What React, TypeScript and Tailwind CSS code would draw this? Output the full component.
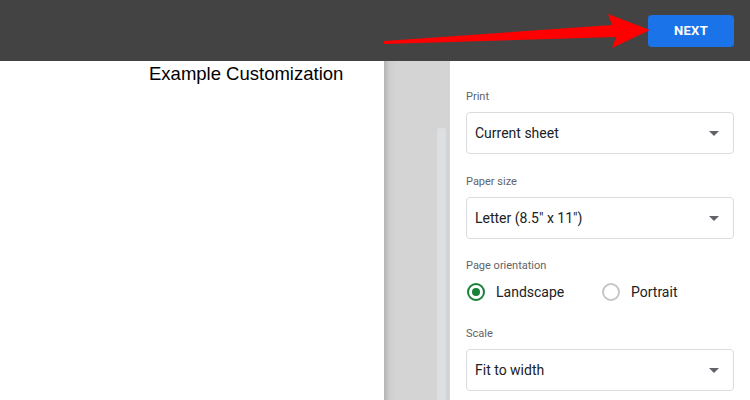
const labelCls =
  "text-[11px] leading-4 text-[#5f6368] font-['Roboto',sans-serif]";

function Select({ value }: { value: string }) {
  return (
    <div className="flex h-[42px] items-center justify-between rounded border border-[#dadce0] bg-white pl-2 pr-[14px]">
      <span className="text-[14px] text-[#202124] font-['Roboto',sans-serif]">
        {value}
      </span>
      <span className="h-0 w-0 border-x-[5px] border-t-[5px] border-x-transparent border-t-[#5f6368]" />
    </div>
  );
}

function Radio({ label, checked }: { label: string; checked?: boolean }) {
  return (
    <div className={checked ? "flex w-[135px] items-center" : "flex items-center"}>
      <span
        className={
          checked
            ? "flex h-[18px] w-[18px] items-center justify-center rounded-full border-2 border-[#188038]"
            : "flex h-[18px] w-[18px] items-center justify-center rounded-full border-2 border-[#c4c7c5]"
        }
      >
        {checked && <span className="h-2 w-2 rounded-full bg-[#188038]" />}
      </span>
      <span className="ml-[11px] text-[14px] text-[#202124] font-['Roboto',sans-serif]">
        {label}
      </span>
    </div>
  );
}

export default function App() {
  return (
    <div className="relative flex h-[400px] w-[750px] flex-col overflow-hidden bg-white">
      <div className="flex h-[61px] shrink-0 items-center justify-end bg-[#434343] pr-4">
        <button className="h-8 w-[86px] rounded bg-[#1a73e8] text-[13px] font-bold tracking-wide text-white font-['Roboto',sans-serif]">
          NEXT
        </button>
      </div>

      <div className="flex flex-1">
        <div className="w-[384px] pl-[149px] pt-[1px]">
          <p className="text-[18.5px] leading-6 text-black font-['Liberation_Sans',Arial,sans-serif]">
            Example Customization
          </p>
        </div>

        <div className="flex w-[66px] bg-[linear-gradient(to_right,#b5b5b5,#cfcfcf_6px,#d4d4d4_12px)]">
          <div className="ml-[53px] mt-[67px] w-[9px] rounded-t-[3px] bg-[#dde0e3]" />
        </div>

        <div className="flex w-[300px] flex-col px-4 pt-[28px]">
          <p className={labelCls}>Print</p>
          <div className="mt-[7px]">
            <Select value="Current sheet" />
          </div>

          <p className={`${labelCls} mt-[20px]`}>Paper size</p>
          <div className="mt-[7px]">
            <Select value={'Letter (8.5" x 11")'} />
          </div>

          <p className={`${labelCls} mt-[19px]`}>Page orientation</p>
          <div className="mt-[6px] flex h-6 items-center pl-px">
            <Radio label="Landscape" checked />
            <Radio label="Portrait" />
          </div>

          <p className={`${labelCls} mt-[22px]`}>Scale</p>
          <div className="mt-[7px]">
            <Select value="Fit to width" />
          </div>
        </div>
      </div>

      {/* red arrow over the header */}
      <svg
        className="absolute left-0 top-0"
        width="750"
        height="61"
        viewBox="0 0 750 61"
      >
        <polygon
          points="384,41 612,25 608,14 650,30 612,48 616,37 384,44"
          fill="#ff0000"
        />
      </svg>
    </div>
  );
}
